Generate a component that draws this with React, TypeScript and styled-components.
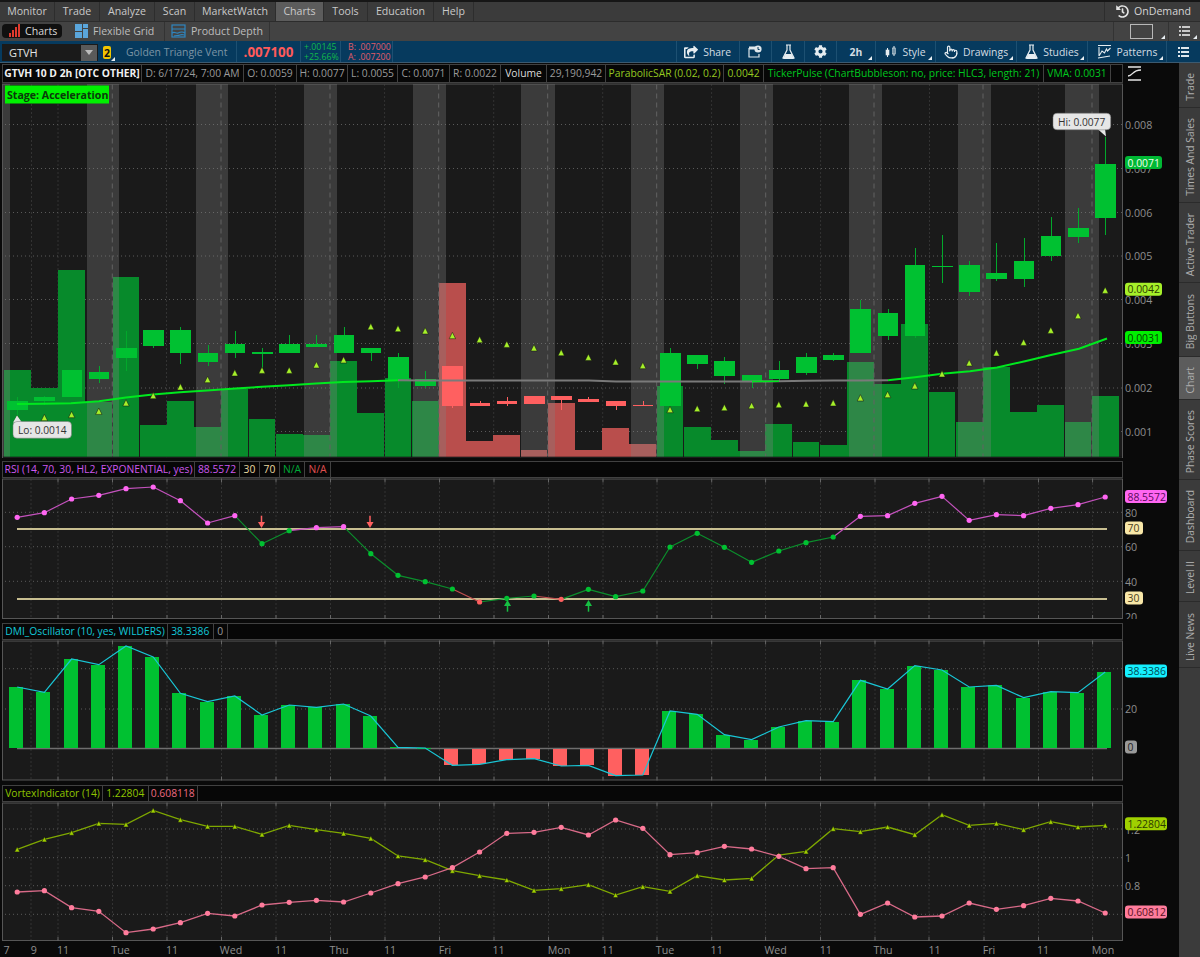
import React from "react";
import styled, { createGlobalStyle } from "styled-components";
import { Pointer } from "lucide-react";
import { FaCog, FaShareSquare, FaHistory } from "react-icons/fa";

const Global = createGlobalStyle`
  html, body { margin: 0; padding: 0; background: #0a0a0a; }
  * { box-sizing: border-box; }
`;

const FONT = `"Open Sans", "Noto Sans", "Liberation Sans", sans-serif`;

const Page = styled.div`
  width: 1200px; height: 957px; overflow: hidden; display: flex; flex-direction: column;
  background: #0a0a0a; font-family: ${FONT}; font-size: 10.6px;
`;
const TopEdge = styled.div` height: 2px; background: #161616; flex: none; `;
const MenuBar = styled.nav`
  height: 19.5px; flex: none; display: flex; align-items: stretch; background: #3b3b3b; border-bottom: 1px solid #2c2c2c;
`;
const MenuItem = styled.div<{ $active?: boolean; $w: number }>`
  width: ${p => p.$w}px; display: flex; align-items: center; justify-content: center; color: #c9c9c9;
  border-right: 1px solid #2d2d2d; background: ${p => (p.$active ? "#5c5c5c" : "transparent")};
`;
const MenuSpacer = styled.div` flex: 1; `;
const OnDemand = styled.div`
  display: flex; align-items: center; gap: 5px; width: 96px; padding-left: 11px; color: #d5d5d5; border-left: 1px solid #2d2d2d;
`;
const SubBar = styled.div`
  height: 19.5px; flex: none; display: flex; align-items: stretch; background: #434343;
`;
const PillTab = styled.div`
  margin: 2px 7px 3px 2px; width: 60px; display: flex; align-items: center; gap: 3px; padding-left: 7px;
  background: #101010; border-radius: 4px; color: #d8d8d8;
`;
const SubItem = styled.div<{ $w: number }>`
  width: ${p => p.$w}px; display: flex; align-items: center; gap: 5px; padding-left: 6px; color: #bdbdbd; border-right: 1px solid #333;
`;
const SubRight = styled.div`
  margin-left: auto; display: flex; align-items: stretch; height: 100%;
`;
const SubRightCell = styled.div<{ $w: number }>`
  position: relative; width: ${p => p.$w}px; display: flex; align-items: center; justify-content: center; border-left: 1px solid #333;
`;
const BlueBar = styled.div`
  height: 22px; flex: none; display: flex; align-items: stretch; background: #063a5e; border-bottom: 1px solid #3c5a70;
`;
const SymbolBox = styled.div`
  margin: 3px 0 1px 2px; width: 96px; display: flex; align-items: center; justify-content: space-between; background: #1a1a1a;
  color: #e4e4e4; padding-left: 7px; font-size: 11px;
`;
const DropBtn = styled.div`
  width: 16px; height: 16px; margin-right: 1px; background: #5a5a5a; display: flex; align-items: center; justify-content: center;
`;
const DropArrow = styled.div`
  width: 0; height: 0; border-left: 4px solid transparent; border-right: 4px solid transparent; border-top: 5px solid #bbb;
`;
const LinkBadge = styled.div`
  position: relative; margin: 5px 0 3px 5px; width: 8px; background: #f2c500; border-radius: 2px; color: #111; font-weight: 700;
  display: flex; align-items: center; justify-content: center; font-size: 10.5px;
`;
const BarCell = styled.div<{ $w: number }>`
  position: relative; width: ${p => p.$w}px; display: flex; align-items: center; justify-content: center; gap: 5px;
  border-right: 1px solid #1d5072; color: #d4dde3; font-size: 10.4px;
`;
const NameCell = styled(BarCell)` color: #7d95a5; justify-content: flex-start; padding-left: 11px; margin-left: 4px; `;
const PriceCell = styled(BarCell)` color: #ff5a5a; font-weight: 700; font-size: 13.4px; `;
const StackCell = styled(BarCell)<{ $c: string; $pl: number }>`
  flex-direction: column; gap: 0; color: ${p => p.$c}; font-size: 8.8px; line-height: 10px; align-items: flex-start;
  padding-left: ${p => p.$pl}px; justify-content: center; white-space: nowrap;
`;
const BarRight = styled.div` margin-left: auto; display: flex; align-items: stretch; `;
const ToolCell = styled(BarCell)`
  border-right: none; border-left: 1px solid #1d5072;
`;
const Corner = styled.span`
  position: absolute; right: 3px; bottom: 2px; width: 0; height: 0;
  border-left: 4px solid transparent; border-bottom: 4px solid #e8eef2;
`;
const Body = styled.div` flex: 1; display: flex; align-items: stretch; min-height: 0; `;
const ChartColumn = styled.div` width: 1179px; display: flex; flex-direction: column; `;
const Legend = styled.div<{ $mt: number; $h: number }>`
  margin-top: ${p => p.$mt}px; height: ${p => p.$h}px; flex: none; display: flex; align-items: stretch;
`;
const LegendCells = styled.div` width: 1121px; margin-left: 2px; display: flex; align-items: stretch; `;
const Cell = styled.div<{ $w?: number; $c?: string; $b?: boolean }>`
  ${p => (p.$w ? `width:${p.$w}px;` : "flex:1;")}
  display: flex; align-items: center; justify-content: center; white-space: nowrap; overflow: hidden;
  border: 1px solid #414141; border-left-width: 0; color: ${p => p.$c ?? "#9a9a9a"};
  font-weight: ${p => (p.$b ? 700 : 400)}; font-size: 10.3px; background: #070707;
  &:first-child { border-left-width: 1px; }
`;
const ScaleIcon = styled.svg` width: 15px; height: 15px; margin: 2px 0 0 4px; `;
const Sheet = styled.svg` display: block; flex: none; width: 1179px; `;
const AxisText = styled.text`
  font-family: ${FONT}; font-size: 10.7px; fill: #8f8f8f; dominant-baseline: central;
`;
const TagText = styled.text<{ $c: string }>`
  font-family: ${FONT}; font-size: 10.4px; fill: ${p => p.$c}; dominant-baseline: central;
`;
const BubbleText = styled.text`
  font-family: ${FONT}; font-size: 10.2px; fill: #333; dominant-baseline: central;
`;
const StageBadge = styled.text`
  font-family: ${FONT}; font-size: 10.6px; font-weight: 700; fill: #0a3a0a; dominant-baseline: central;
`;
const Tabs = styled.aside`
  width: 21px; display: flex; flex-direction: column; background: #3b3b3b;
`;
const Tab = styled.div<{ $h: number; $active?: boolean }>`
  height: ${p => p.$h}px; flex: none; display: flex; align-items: center; justify-content: center; padding-top: 4px;
  border-bottom: 1px solid #2b2b2b; background: ${p => (p.$active ? "#5c5c5c" : "transparent")};
`;
const TabLabel = styled.span`
  writing-mode: vertical-rl; transform: rotate(180deg); color: #adadad; font-size: 10.3px; white-space: nowrap;
`;

/* ---------- data ---------- */
const X = (i: number) => 17.2 + 27.2 * i;
// [bodyTop, bodyBottom, wickTop, wickBottom]
const candles: number[][] = [
  [400.7,409.3,396,415],[396,400.7,395,404],[369.3,396.7,369.3,396.7],[371.7,378.7,365.7,382.7],[347.3,357.3,330,370],
  [329.7,345.3,329.7,347.7],[329.7,352.7,326,363.3],[352,361,344,365],[343.7,352.7,330,357],[351.7,353,347.7,368.3],
  [343.7,352.7,334,352.7],[343.7,346,334,346],[334.3,352.7,326,352.7],[347,352.7,347,360.7],[356.7,380,352,387],
  [378,385.3,370,387.3],[365,405.7,365,407],[402,405.7,400,405.7],[400,403,396,405.7],[395.7,403,395.7,403],
  [395.7,399.3,395.7,409.3],[398,401,396,401],[400.3,405.7,400.3,409],[404.7,405.7,400,405.7],[352,405.7,347.7,405.7],
  [354,363.7,354,368.3],[360.3,375,356.7,383.3],[374,381.7,374,387.3],[369.7,378.7,360.7,381.7],[356.7,372.3,352.3,374.3],
  [354,359.3,352.3,360.7],[308,352.7,299,352.7],[312.7,335,308.3,339],[264.3,335,247,337.3],[265.3,266.7,234,282.7],
  [264.3,291.3,260,295.3],[272.7,278.3,242.3,280],[260,278.3,237.7,286],[235.7,255.7,216,260],[227,236.3,207.3,242.3],
  [163,217,136.7,234],
];
const redCandles = new Set([16,17,18,19,20,21,22,23]);
const volumes = [369.7,387,269,401.7,276.3,424.3,400,426,388.3,418,433.3,434.3,360.3,412.3,377.7,400.7,282,440.3,434,449,402,449.7,427.3,443.3,385.3,426.3,439.3,450.7,423.7,441.3,444,361,383.7,323,391,421,366.7,411.3,404,421,395];
const sar = [418.3,417,414,410.7,402.3,395,386.3,379,372.3,369.7,369.7,364.3,359.3,326,328,330.3,335,339,343.7,347.3,352,356.7,361.3,365,409,408,407,405,404,403.3,402.3,397.3,394,385.3,373.3,362.3,352.3,341.7,329.7,315,289.7];
const bands = [[3,10],[87,119],[196,228],[304,337],[413,446],[521,555],[631,664],[740,773],[849,882],[958,991],[1065,1099]];
const dashed = [112.3,221,330,438.7,547.7,656.7,765.7,874,983,1092];
const mainDots = [31.5,58,166.5,275.5,384.6,493.7,602.7,711.6,820.6,929.5,1038.5];
const priceGrid = [[124,"0.008"],[168,"0.007"],[212,"0.006"],[255.5,"0.005"],[299,"0.004"],[343,"0.003"],[387.5,"0.002"],[431,"0.001"]] as [number,string][];
const vmaA = [[17,403.5],[44,403.3],[71,402.7],[99,400.7],[126,397],[153,394],[180,391.7],[207,390],[235,388],[262,386.3],[289,384.7],[316,383],[343,381.5],[371,380.7],[398,379.7]];
const vmaGray = [[398,379.7],[425,380],[452,380],[480,380],[507,380],[534,380],[561,380],[589,380],[616,381],[643,381],[670,381],[698,381],[725,381],[752,381],[779,380.7],[807,380.3],[834,380],[861,380],[888,379.7]];
const vmaB = [[888,379.7],[915,376.7],[942,373.3],[970,370.7],[997,367],[1025,360.7],[1052,354.3],[1079,348.3],[1107,338]];

const rsiZ = [187,173,132,121,101,96,137,204,182,266,227,218,215,296,361,380,402,441,430,423,433,403,425,408,276,235,277,322,288,263,246,184,182,145,124,196,179,182,160,149,126];
const rsi = rsiZ.map(z => 455 + z / 3);
const rsiColor = (i: number) => {
  if (i <= 8 || i >= 31) return "pink";
  if (i === 11 || i === 12) return "pink";
  if (i === 17 || i === 20) return "red";
  return "green";
};
const RC: Record<string, { dot: string; line: string }> = {
  pink: { dot: "#ff66f2", line: "#c452bd" },
  green: { dot: "#00c131", line: "#0b8f2c" },
  red: { dot: "#ff6060", line: "#c25050" },
};
const dmiZ = [201,217,117,134,78,111,220,245,228,285,255,262,252,288,382,384,436,433,419,416,438,436,467,465,273,283,344,359,321,302,305,181,207,137,150,201,196,233,215,218,156];
const dmi = dmiZ.map(z => 620 + z / 3);
const vgZ = [208,178,158,130,133,91,119,139,139,163,136,149,160,175,228,239,272,287,300,331,326,314,345,320,334,287,300,295,225,214,146,155,141,164,104,136,130,149,125,141,136];
const vpZ = [336,332,383,394,458,447,428,400,408,375,367,361,366,339,311,291,263,216,160,157,142,165,120,145,224,218,199,207,229,266,263,403,369,411,408,369,388,377,355,363,399];
const vg = vgZ.map(z => 780 + z / 3);
const vp = vpZ.map(z => 780 + z / 3);
const lowerDots = [31,58,112.5,167,221.5,276,330.5,385,439.5,494,548.5,603,657,711.7,765.6,820.5,875,929,984,1038.5,1092.6];
const timeLabels: [number, string][] = [[6.5,"7"],[33.7,"9"],[63,"11"],[120.5,"Tue"],[172,"11"],[231,"Wed"],[281,"11"],[339,"Thu"],[390,"11"],[445,"Fri"],[498.6,"11"],[559,"Mon"],[607.7,"11"],[665,"Tue"],[716.7,"11"],[775.6,"Wed"],[825.8,"11"],[883,"Thu"],[934.5,"11"],[989,"Fri"],[1043,"11"],[1103,"Mon"]];

const pts = (a: number[][]) => a.map(p => p.join(",")).join(" ");
const series = (ys: number[]) => ys.map((y, i) => `${X(i)},${y}`).join(" ");

/* ---------- svg parts ---------- */
const Plot = ({ top, bottom, hs, vs }: { top: number; bottom: number; hs: number[]; vs: number[] }) => (
  <g>
    <rect x={2.5} y={top + 0.5} width={1120} height={bottom - top - 1} fill="#1a1a1a" stroke="#565656" />
    {hs.map(y => <line key={y} x1={5} x2={1122} y1={y} y2={y} stroke="#5a5a5a" strokeDasharray="1 3" />)}
    {vs.map(x => <line key={x} x1={x} x2={x} y1={top + 1} y2={bottom - 1} stroke="#4c4c4c" strokeDasharray="1 3" />)}
  </g>
);
const Ticks = ({ top, bottom }: { top: number; bottom: number }) => (
  <g>
    {lowerDots.filter((_, i) => i > 0).map(x => (
      <g key={x}>
        <line x1={x} x2={x} y1={top} y2={top + 4} stroke="#666" />
        <line x1={x} x2={x} y1={bottom - 4} y2={bottom} stroke="#666" />
      </g>
    ))}
  </g>
);
const Tag = ({ y, w, bg, fg, label }: { y: number; w: number; bg: string; fg: string; label: string }) => (
  <g>
    <rect x={1125} y={y - 6.5} width={w} height={13} rx={3} fill={bg} />
    <TagText $c={fg} x={1127.5} y={y}>{label}</TagText>
  </g>
);
const Axis = ({ y, label }: { y: number; label: string }) => <AxisText x={1125} y={y}>{label}</AxisText>;
const Dots = ({ ys, fill, r = 2.4 }: { ys: number[]; fill: string; r?: number }) => (
  <g>{ys.map((y, i) => <circle key={i} cx={X(i)} cy={y} r={r} fill={fill} />)}</g>
);
const Tri = ({ x, y, fill, s = 3 }: { x: number; y: number; fill: string; s?: number }) => (
  <polygon points={`${x - s},${y + s} ${x + s},${y + s} ${x},${y - s}`} fill={fill} stroke="#111" strokeWidth={0.5} />
);

const PriceChart = () => (
  <Sheet viewBox="0 82.5 1179 375.5" height={375.5}>
    <Plot top={83} bottom={458} hs={priceGrid.map(g => g[0])} vs={mainDots} />
    <g shapeRendering="crispEdges">
      {volumes.map((t, i) => (
        <rect key={i} x={X(i) - 13.4} y={t} width={26.7} height={456.5 - t} fill={redCandles.has(i) ? "#b94e4c" : "#078a2b"} />
      ))}
      {bands.map(b => <rect key={b[0]} x={b[0]} y={83.5} width={b[1] - b[0]} height={373} fill="rgba(130,130,130,0.32)" />)}
    </g>
    {dashed.map(x => <line key={x} x1={x} x2={x} y1={84} y2={456} stroke="#636363" strokeDasharray="5 4" />)}
    <line x1={3} x2={1122} y1={456.7} y2={456.7} stroke="#111" />
    <g shapeRendering="crispEdges">
      {candles.map((c, i) => {
        const col = redCandles.has(i) ? "#ff6060" : "#00c131";
        return (
          <g key={i}>
            <rect x={Math.round(X(i))} y={c[2]} width={1} height={c[3] - c[2]} fill={redCandles.has(i) ? "#ff6060" : "#02a82b"} />
            <rect x={X(i) - 10} y={c[0]} width={20.5} height={Math.max(1, c[1] - c[0])} fill={col} />
          </g>
        );
      })}
    </g>
    <polyline points={pts(vmaGray)} fill="none" stroke="#7a7a7a" strokeWidth={2} />
    <polyline points={pts(vmaA)} fill="none" stroke="#00e81f" strokeWidth={2} />
    <polyline points={pts([[752, 381], [779, 380.7]])} fill="none" stroke="#00e81f" strokeWidth={1.6} />
    <polyline points={pts(vmaB)} fill="none" stroke="#00e81f" strokeWidth={2} />
    {sar.map((y, i) => <Tri key={i} x={X(i)} y={y} fill="#a6f02a" s={3.2} />)}

    <rect x={5} y={85} width={104} height={18} fill="#00f000" />
    <StageBadge x={7} y={94}>Stage: Acceleration</StageBadge>

    <g>
      <polygon points="13,422 22,422 17,415" fill="#e6e6e6" />
      <rect x={13} y={421} width={58.5} height={16.7} rx={4} fill="#e6e6e6" stroke="#777" strokeWidth={0.5} />
      <BubbleText x={18} y={429.5}>Lo: 0.0014</BubbleText>
      <polygon points="1097,128 1105,128 1106,136" fill="#e6e6e6" />
      <rect x={1053} y={112.7} width={57.7} height={16.6} rx={4} fill="#e6e6e6" stroke="#777" strokeWidth={0.5} />
      <BubbleText x={1058} y={121}>Hi: 0.0077</BubbleText>
    </g>

    {priceGrid.map(g => <Axis key={g[1]} y={g[0]} label={g[1]} />)}
    <Tag y={162} w={37} bg="#00b834" fg="#f0fff0" label="0.0071" />
    <Tag y={288.7} w={37} bg="#a6f02a" fg="#2c3a00" label="0.0042" />
    <Tag y={337} w={37} bg="#00f000" fg="#064000" label="0.0031" />
  </Sheet>
);

const RsiArrow = ({ x, up }: { x: number; up?: boolean }) => up ? (
  <g fill="#16c043" stroke="#16c043">
    <line x1={x} x2={x} y1={604} y2={611.7} strokeWidth={1.5} />
    <polygon points={`${x - 3.5},${606} ${x + 3.5},${606} ${x},${600}`} stroke="none" />
  </g>
) : (
  <g fill="#ff6060" stroke="#ff6060">
    <line x1={x} x2={x} y1={515.7} y2={524} strokeWidth={1.5} />
    <polygon points={`${x - 3.5},${522} ${x + 3.5},${522} ${x},${528}`} stroke="none" />
  </g>
);

const RsiChart = () => (
  <Sheet viewBox="0 478 1179 141" height={141}>
    <Plot top={478.5} bottom={619} hs={[512.3, 546.7, 581.3]} vs={lowerDots} />
    <Ticks top={478.5} bottom={619} />
    {[529, 599].map(y => (
      <g key={y}>
        <line x1={17} x2={1107} y1={y} y2={y} stroke="#9a8f5f" strokeWidth={2} />
        <line x1={17} x2={1107} y1={y} y2={y} stroke="#f6eec4" strokeWidth={1} />
      </g>
    ))}
    {rsi.slice(1).map((y, k) => {
      const i = k + 1;
      const c = i === 31 ? "pink" : i === 9 ? "green" : rsiColor(i);
      return <line key={i} x1={X(i - 1)} y1={rsi[i - 1]} x2={X(i)} y2={y} stroke={RC[c].line} strokeWidth={1.2} />;
    })}
    {rsi.map((y, i) => <circle key={i} cx={X(i)} cy={y} r={2.6} fill={RC[rsiColor(i)].dot} />)}
    <RsiArrow x={261.5} />
    <RsiArrow x={370} />
    <RsiArrow x={507.5} up />
    <RsiArrow x={588.5} up />
    <Axis y={512.7} label="80" />
    <Axis y={547} label="60" />
    <Axis y={581.6} label="40" />
    <Axis y={617} label="20" />
    <Tag y={496.5} w={42} bg="#ff66f2" fg="#5a0a5a" label="88.5572" />
    <Tag y={528} w={18} bg="#f8e7a8" fg="#4a4020" label="70" />
    <Tag y={598} w={18} bg="#f8e7a8" fg="#4a4020" label="30" />
  </Sheet>
);

const DmiChart = () => (
  <Sheet viewBox="0 640 1179 141" height={141}>
    <Plot top={640.5} bottom={780.5} hs={[668.7, 709]} vs={lowerDots} />
    <Ticks top={640.5} bottom={780.5} />
    <line x1={17} x2={1107} y1={748.5} y2={748.5} stroke="#6e6e6e" strokeWidth={1.4} />
    <g shapeRendering="crispEdges">
      {dmi.map((y, i) => {
        const up = y < 748.3;
        const top = up ? y : 748.8;
        const h = up ? 748.3 - y : y - 748.8;
        return <rect key={i} x={X(i) - 8} y={top} width={14} height={Math.max(h, 1)} fill={up ? "#00c131" : "#ff6060"} />;
      })}
    </g>
    <polyline points={series(dmi)} fill="none" stroke="#19c6d6" strokeWidth={1.2} />
    <Axis y={709} label="20" />
    <Tag y={671} w={42} bg="#14f0ff" fg="#004a55" label="38.3386" />
    <Tag y={747} w={12} bg="#9a9a9a" fg="#222" label="0" />
  </Sheet>
);

const VortexChart = () => (
  <Sheet viewBox="0 802 1179 155" height={155}>
    <Plot top={802.5} bottom={941} hs={[829, 857.7, 885.7, 914.3]} vs={lowerDots} />
    <Ticks top={802.5} bottom={941} />
    <polyline points={series(vg)} fill="none" stroke="#7fa800" strokeWidth={1.3} />
    <polyline points={series(vp)} fill="none" stroke="#d86a88" strokeWidth={1.3} />
    {vg.map((y, i) => <Tri key={i} x={X(i)} y={y} fill="#a0d000" s={2.6} />)}
    <Dots ys={vp} fill="#ff7c9c" r={2.6} />
    <Axis y={829.5} label="1.2" />
    <Axis y={858} label="1" />
    <Axis y={886} label="0.8" />
    <Tag y={823.7} w={42} bg="#9fd000" fg="#2c3a00" label="1.22804" />
    <Tag y={912} w={42} bg="#ff7c9c" fg="#5a1020" label="0.60812" />
    {timeLabels.map((t, i) => (
      <AxisText key={i} x={t[0]} y={949.5} textAnchor="middle">{t[1]}</AxisText>
    ))}
  </Sheet>
);

/* ---------- icons ---------- */
const BarsIcon = () => (
  <svg width="13" height="13" viewBox="0 0 13 13">
    <g fill="#e03a2e">
      <rect x="0" y="9" width="2" height="4" /><rect x="3" y="6" width="2" height="7" />
      <rect x="6" y="3" width="2" height="10" /><rect x="9" y="0" width="2" height="13" />
    </g>
  </svg>
);
const GridIcon = () => (
  <svg width="13" height="14" viewBox="0 0 13 14">
    <g fill="#5aa6dc">
      <rect x="0" y="0" width="7" height="7" /><rect x="8" y="0" width="5" height="4" />
      <rect x="8" y="5" width="5" height="9" /><rect x="0" y="8" width="7" height="6" />
    </g>
  </svg>
);
const DepthIcon = () => (
  <svg width="15" height="14" viewBox="0 0 15 14" fill="none" stroke="#2f86c0" strokeWidth="1.2">
    <rect x="1" y="1" width="13" height="12" />
    <path d="M1 5h13M1 9c3-2 4 1 6 0s4-2 7 0M3 12c2-1 4 0 6-1s3 0 5 0" />
  </svg>
);
const CalIcon = () => (
  <svg width="14" height="14" viewBox="0 0 14 14">
    <path d="M1 3h8M1 3v9h10V9" fill="none" stroke="#dfe7ec" strokeWidth="1.2" />
    <rect x="1" y="1.5" width="8" height="3" fill="#dfe7ec" />
    <circle cx="10" cy="4" r="3.6" fill="#dfe7ec" />
    <path d="M10 2v2.5h1.6" fill="none" stroke="#063a5e" strokeWidth="1" />
  </svg>
);
const FlaskIcon = () => (
  <svg width="13" height="16" viewBox="0 0 13 16">
    <path d="M4 1h5M5 1v5L1 14h11L8 6V1" fill="none" stroke="#e6edf1" strokeWidth="1.2" />
    <path d="M3.3 10h6.4L12 15H1z" fill="#e6edf1" />
  </svg>
);
const StyleIcon = () => (
  <svg width="12" height="14" viewBox="0 0 12 14" fill="#e6edf1" stroke="#e6edf1">
    <path d="M2.5 3v9M9 1v10" fill="none" />
    <rect x="1" y="5" width="3" height="5" strokeWidth="0.6" />
    <rect x="7.5" y="3" width="3" height="6" strokeWidth="0.6" fill="none" />
  </svg>
);
const PatternIcon = () => (
  <svg width="15" height="15" viewBox="0 0 15 15" fill="none" stroke="#e6edf1" strokeWidth="1.1">
    <path d="M1 1.5h13M2 3v9M2 12l3-5 2.5 2 2-4 1 2 3-3M1 14l12-2" />
  </svg>
);
const MenuLines = ({ c = "#dfe7ec" }: { c?: string }) => (
  <svg width="11" height="10" viewBox="0 0 11 10" fill={c}>
    <rect x="0" y="0" width="2" height="2" /><rect x="3" y="0" width="8" height="2" />
    <rect x="0" y="4" width="2" height="2" /><rect x="3" y="4" width="8" height="2" />
    <rect x="0" y="8" width="2" height="2" /><rect x="3" y="8" width="8" height="2" />
  </svg>
);

const menu: [string, number][] = [["Monitor",55],["Trade",45],["Analyze",55],["Scan",40],["MarketWatch",81],["Charts",48],["Tools",44],["Education",66],["Help",40]];
const tabs: [string, number][] = [["Trade",45],["Times And Sales",95],["Active Trader",80],["Big Buttons",73.5],["Chart",43.5],["Phase Scores",80],["Dashboard",71],["Level II",51],["Live News",66]];

export default function App() {
  return (
    <Page>
      <Global />
      <TopEdge />
      <MenuBar>
        {menu.map(m => <MenuItem key={m[0]} $w={m[1]} $active={m[0] === "Charts"}>{m[0]}</MenuItem>)}
        <MenuSpacer />
        <OnDemand><FaHistory size={13} color="#e4e4e4" />OnDemand</OnDemand>
      </MenuBar>
      <SubBar>
        <PillTab><BarsIcon />Charts</PillTab>
        <SubItem $w={96}><GridIcon />Flexible Grid</SubItem>
        <SubItem $w={105}><DepthIcon />Product Depth</SubItem>
        <SubRight>
          <SubRightCell $w={55}>
            <svg width="23" height="15" viewBox="0 0 23 15"><rect x="0.5" y="0.5" width="22" height="14" fill="none" stroke="#b8b8b8" /></svg>
            <Corner />
          </SubRightCell>
          <SubRightCell $w={32}><MenuLines c="#c9c9c9" /><Corner /></SubRightCell>
        </SubRight>
      </SubBar>
      <BlueBar>
        <SymbolBox>GTVH<DropBtn><DropArrow /></DropBtn></SymbolBox>
        <LinkBadge>2<Corner style={{ right: -4, bottom: -2 }} /></LinkBadge>
        <NameCell $w={122}>Golden Triangle Vent</NameCell>
        <PriceCell $w={64}>.007100</PriceCell>
        <StackCell $w={40} $c="#12b84a" $pl={3}><span>+.00145</span><span>+25.66%</span></StackCell>
        <StackCell $w={52} $c="#e25c68" $pl={7}><span>B: .007000</span><span>A: .007200</span></StackCell>
        <BarRight>
          <ToolCell $w={62.5}><FaShareSquare size={14} color="#e6edf1" />Share</ToolCell>
          <ToolCell $w={32.5}><CalIcon /></ToolCell>
          <ToolCell $w={33}><FlaskIcon /></ToolCell>
          <ToolCell $w={32}><FaCog size={13} color="#e6edf1" /></ToolCell>
          <ToolCell $w={39}><b>2h</b><Corner /></ToolCell>
          <ToolCell $w={60}><StyleIcon />Style<Corner /></ToolCell>
          <ToolCell $w={81}><Pointer size={14} color="#e6edf1" />Drawings<Corner /></ToolCell>
          <ToolCell $w={71}><FlaskIcon />Studies<Corner /></ToolCell>
          <ToolCell $w={79}><PatternIcon />Patterns<Corner /></ToolCell>
          <ToolCell $w={34}><MenuLines /></ToolCell>
        </BarRight>
      </BlueBar>
      <Body>
        <ChartColumn>
          <Legend $mt={1} $h={18.5}>
            <LegendCells>
              <Cell $w={140} $c="#f0f0f0" $b>GTVH 10 D 2h [OTC OTHER]</Cell>
              <Cell $w={102}>D: 6/17/24, 7:00 AM</Cell>
              <Cell $w={53}>O: 0.0059</Cell>
              <Cell $w={51}>H: 0.0077</Cell>
              <Cell $w={50}>L: 0.0055</Cell>
              <Cell $w={52}>C: 0.0071</Cell>
              <Cell $w={51}>R: 0.0022</Cell>
              <Cell $w={46} $c="#dcdcdc">Volume</Cell>
              <Cell $w={59}>29,190,942</Cell>
              <Cell $w={118} $c="#94c820">ParabolicSAR (0.02, 0.2)</Cell>
              <Cell $w={40} $c="#94c820">0.0042</Cell>
              <Cell $w={280} $c="#00c81f">TickerPulse (ChartBubbleson: no, price: HLC3, length: 21)</Cell>
              <Cell $w={67} $c="#00c81f">VMA: 0.0031</Cell>
              <Cell />
            </LegendCells>
            <ScaleIcon viewBox="0 0 15 15" fill="none" stroke="#e6e6e6" strokeWidth="1.3">
              <path d="M1 1h13M1 14h13M1 10c5 0 4-6 13-6" />
            </ScaleIcon>
          </Legend>
          <PriceChart />
          <Legend $mt={2.5} $h={17.5}>
            <LegendCells>
              <Cell $w={193} $c="#cc58ee">RSI (14, 70, 30, HL2, EXPONENTIAL, yes)</Cell>
              <Cell $w={45} $c="#cc58ee">88.5572</Cell>
              <Cell $w={20} $c="#e8d8a0">30</Cell>
              <Cell $w={20} $c="#e8d8a0">70</Cell>
              <Cell $w={25} $c="#00a838">N/A</Cell>
              <Cell $w={26} $c="#e05050">N/A</Cell>
              <Cell />
            </LegendCells>
          </Legend>
          <RsiChart />
          <Legend $mt={3.5} $h={17.5}>
            <LegendCells>
              <Cell $w={166} $c="#12c8d8">DMI_Oscillator (10, yes, WILDERS)</Cell>
              <Cell $w={45.5} $c="#12c8d8">38.3386</Cell>
              <Cell $w={14.5}>0</Cell>
              <Cell />
            </LegendCells>
          </Legend>
          <DmiChart />
          <Legend $mt={3.5} $h={17.5}>
            <LegendCells>
              <Cell $w={101} $c="#8fc400">VortexIndicator (14)</Cell>
              <Cell $w={45.5} $c="#8fc400">1.22804</Cell>
              <Cell $w={49.5} $c="#ee6a80">0.608118</Cell>
              <Cell />
            </LegendCells>
          </Legend>
          <VortexChart />
        </ChartColumn>
        <Tabs>
          {tabs.map(t => (
            <Tab key={t[0]} $h={t[1]} $active={t[0] === "Chart"}><TabLabel>{t[0]}</TabLabel></Tab>
          ))}
        </Tabs>
      </Body>
    </Page>
  );
}
